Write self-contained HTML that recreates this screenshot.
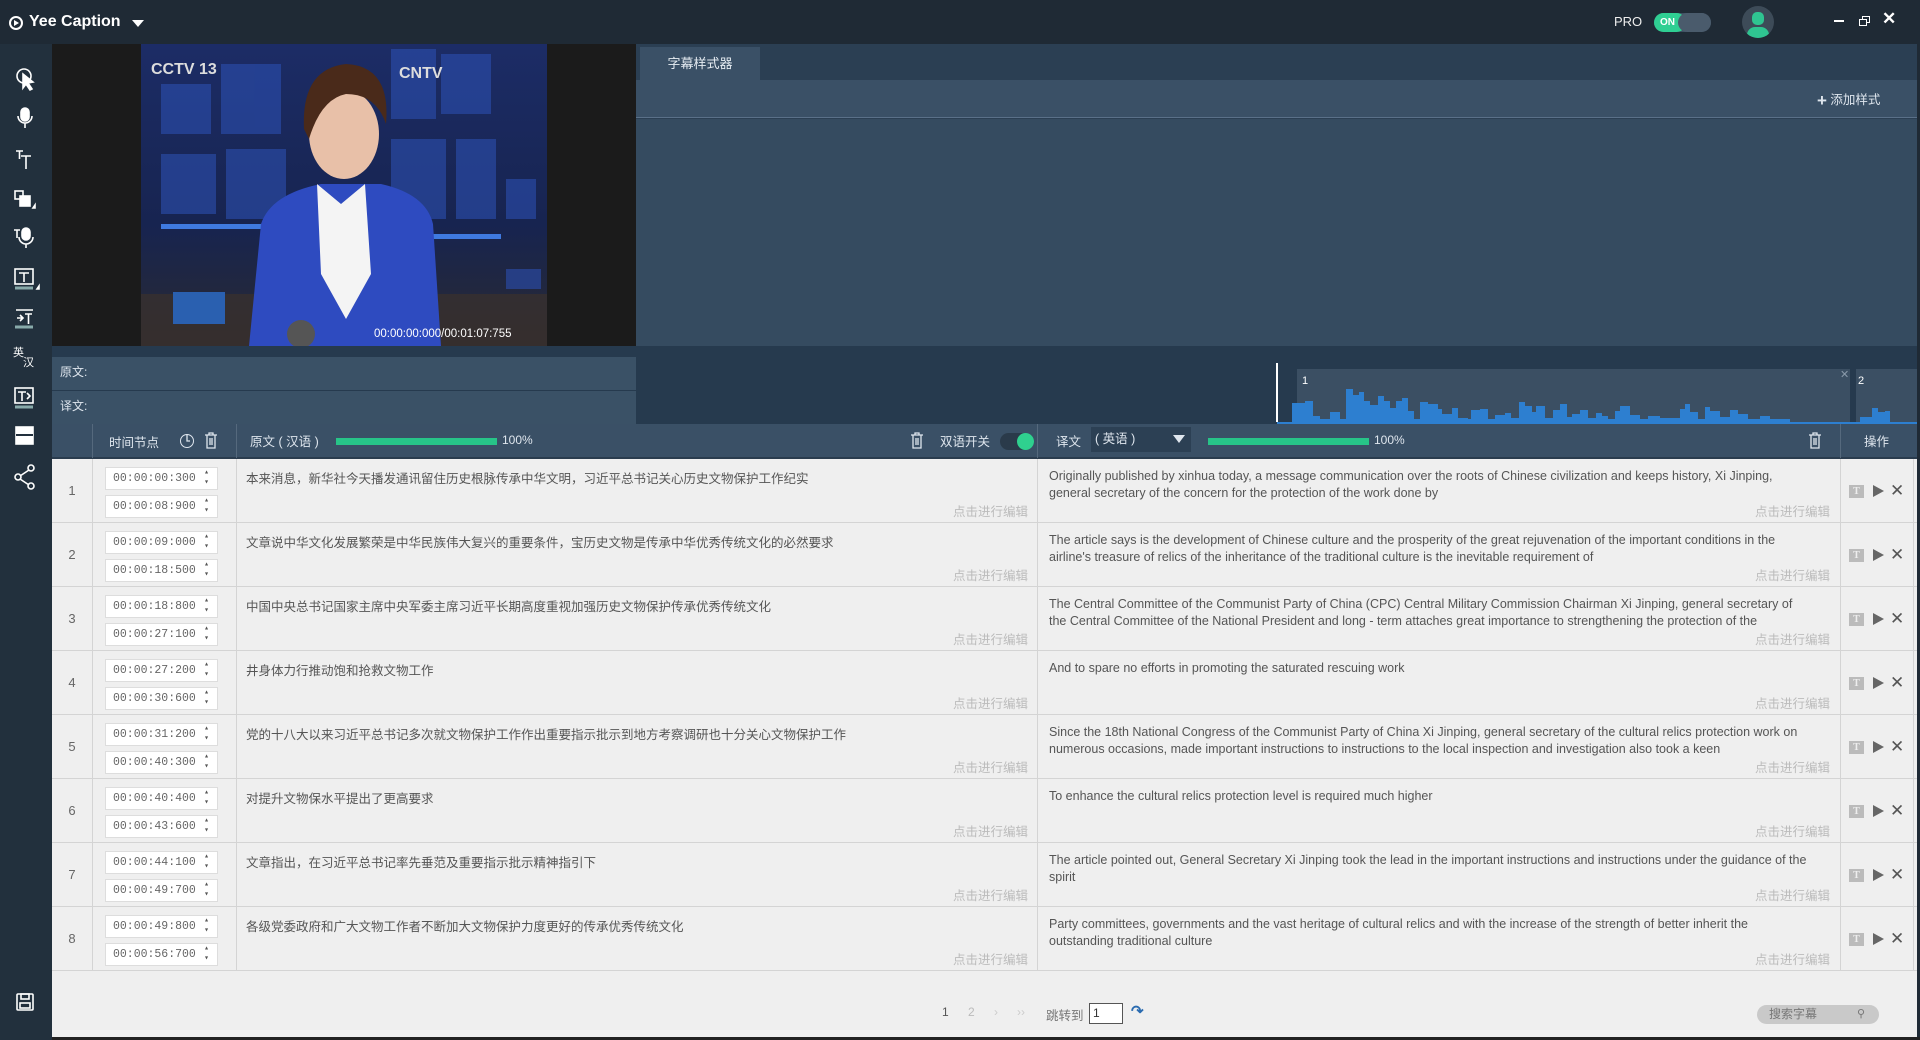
<!DOCTYPE html>
<html><head><meta charset="utf-8"><style>
*{margin:0;padding:0;box-sizing:border-box}
body{width:1920px;height:1040px;overflow:hidden;background:#efefef;font-family:"Liberation Sans","Noto Sans CJK SC",sans-serif;position:relative;font-size:13px;color:#555}
.a{position:absolute}
.w{color:#dfe6ee}
.row{position:absolute;left:52px;width:1868px;height:64px;border-bottom:1px solid #d4d4d4;background:#efefef}
.num{position:absolute;left:0;width:40px;top:0;height:63px;line-height:63px;text-align:center;color:#666}
.vs{position:absolute;top:0;height:63px;width:1px;background:#d4d4d4}
.ti{position:absolute;left:53px;width:113px;height:23px;background:#fff;border:1px solid #ddd;font-family:"Liberation Mono",monospace;font-size:11.5px;color:#666;padding-left:7px;line-height:21px}
.ti:after{content:"▴\A▾";white-space:pre;position:absolute;right:8px;top:0px;font-size:8px;line-height:10px;color:#555}
.zh{position:absolute;left:194px;top:9px;font-size:12.5px;color:#555}
.ed{position:absolute;font-size:12.5px;color:#bbb;top:42px}
.en{position:absolute;left:997px;top:9px;width:762px;font-size:12.5px;line-height:17px;color:#555}
</style></head><body>
<!-- title bar -->
<div class="a" style="left:0;top:0;width:1920px;height:44px;background:#1f2a35"></div>
<div class="a" style="left:9px;top:16px;width:14px;height:14px;border:2px solid #fff;border-radius:50%"></div>
<div class="a" style="left:14px;top:20px;width:0;height:0;border-left:5px solid #fff;border-top:3px solid transparent;border-bottom:3px solid transparent"></div>
<div class="a" style="left:29px;top:13px;color:#fff;font-weight:bold;font-size:16px">Yee Caption</div>
<div class="a" style="left:132px;top:20px;border-left:6px solid transparent;border-right:6px solid transparent;border-top:7px solid #fff"></div>
<div class="a" style="left:1614px;top:14px;color:#eee;font-size:13px">PRO</div>
<div class="a" style="left:1654px;top:13px;width:57px;height:19px;border-radius:10px;background:#3e5062"></div>
<div class="a" style="left:1654px;top:13px;width:32px;height:19px;border-radius:10px;background:#2fcf93;color:#fff;font-size:10px;font-weight:bold;line-height:19px;padding-left:6px">ON</div>
<div class="a" style="left:1678px;top:13px;width:33px;height:19px;border-radius:10px;background:#4a5b6c"></div>
<div class="a" style="left:1742px;top:6px;width:32px;height:32px;border-radius:50%;background:#3d4b58;overflow:hidden">
<div class="a" style="left:10px;top:6px;width:12px;height:13px;border-radius:5px;background:#2fc491"></div>
<div class="a" style="left:5px;top:21px;width:22px;height:14px;border-radius:8px 8px 0 0;background:#2fc491"></div></div>
<div class="a" style="left:1834px;top:20px;width:10px;height:2px;background:#fff"></div>
<div class="a" style="left:1862px;top:16px;width:8px;height:7px;border:1.5px solid #fff"></div>
<div class="a" style="left:1859px;top:19px;width:8px;height:7px;border:1.5px solid #fff;background:#1f2a35"></div>
<div class="a" style="left:1882px;top:9px;color:#fff;font-size:17px;font-weight:bold">✕</div>
<!-- sidebar -->
<div class="a" style="left:0;top:44px;width:52px;height:996px;background:#22303d"></div>
<svg class="a" style="left:0;top:44px" width="52" height="996" fill="none" stroke="#fff" stroke-width="1.6">
<circle cx="24" cy="32" r="7"/><path d="M23 30 L23 44 L26 40 L30 46 L32 45 L28 39 L33 38 Z" fill="#fff"/>
<rect x="21" y="64" width="8" height="13" rx="4" fill="#fff"/><path d="M18 72 a7 7 0 0 0 14 0 M25 79 v5"/>
<path d="M16 107 h7 M19.5 107 v8 M21 112 h10 M26 112 v13"/>
<rect x="15" y="147" width="8" height="8"/><rect x="20" y="152" width="10" height="10" fill="#fff"/><path d="M33 164 l2 -3 v3z" fill="#fff"/>
<path d="M14 186 h6 M17 186 v8"/><rect x="22" y="184" width="8" height="12" rx="4" fill="#fff"/><path d="M19 193 a7 7 0 0 0 14 0 M26 200 v4"/>
<rect x="15" y="225" width="18" height="15"/><path d="M19 229 h10 M24 229 v9"/><path d="M15 244 h18" stroke="#8aa" stroke-width="3"/><path d="M37 245 l2-3 v3z" fill="#fff"/>
<path d="M16 266 h17 M20 271 l3 3 l-3 3 M17 274 h5 M25 270 h7 M28.5 270 v10"/><path d="M15 283 h18" stroke="#8aa" stroke-width="3"/>
<text x="13" y="312" font-size="11" fill="#fff" stroke="none" font-family="Noto Sans CJK SC">英</text><text x="23" y="322" font-size="11" fill="#fff" stroke="none" font-family="Noto Sans CJK SC">汉</text>
<rect x="15" y="344" width="18" height="15"/><path d="M18 348 h8 M22 348 v9 M27 349 l3 3 l-3 3"/><path d="M15 363 h18" stroke="#8aa" stroke-width="3"/>
<rect x="16" y="383" width="17" height="17" fill="#fff"/><path d="M16 391 h17" stroke="#22303d" stroke-width="2"/>
<circle cx="31" cy="424" r="3"/><circle cx="18" cy="433" r="3"/><circle cx="31" cy="442" r="3"/><path d="M20 432 l9 -6 M20 435 l9 6"/>
<rect x="17" y="950" width="16" height="16" rx="1"/><rect x="21" y="950" width="8" height="5"/><rect x="20" y="959" width="10" height="5"/>
</svg>
<!-- video area -->
<div class="a" style="left:52px;top:44px;width:584px;height:302px;background:#1b1b1b"></div>
<svg class="a" style="left:141px;top:44px" width="406" height="302">
<defs><linearGradient id="g" x1="0" y1="0" x2="0" y2="1"><stop offset="0" stop-color="#1c2c66"/><stop offset=".6" stop-color="#172450"/><stop offset="1" stop-color="#2a2a30"/></linearGradient></defs>
<rect width="406" height="302" fill="url(#g)"/>
<g fill="#2c4fb0" opacity=".6"><rect x="20" y="40" width="50" height="50"/><rect x="80" y="20" width="60" height="70"/><rect x="20" y="110" width="55" height="60"/><rect x="85" y="105" width="60" height="70"/><rect x="250" y="5" width="45" height="70"/><rect x="300" y="10" width="50" height="60"/><rect x="250" y="95" width="55" height="80"/><rect x="315" y="95" width="40" height="80"/><rect x="365" y="135" width="30" height="40"/><rect x="365" y="225" width="35" height="20"/></g>
<rect x="20" y="180" width="100" height="5" fill="#3f7ae0"/><rect x="290" y="190" width="70" height="5" fill="#3f7ae0"/>
<rect x="0" y="250" width="406" height="52" fill="#3a302c" opacity=".7"/>
<path d="M108 302 L120 180 Q130 150 180 140 L240 140 Q285 150 292 180 L300 302Z" fill="#2e4bc0"/>
<path d="M176 140 L200 160 L224 140 L230 230 L205 275 L180 230Z" fill="#f4f4f4"/>
<ellipse cx="203" cy="90" rx="35" ry="45" fill="#e8c0a8"/>
<path d="M163 85 Q160 25 205 20 Q250 22 245 80 Q235 50 205 50 Q180 55 168 95Z" fill="#4a2a1a"/>
<circle cx="160" cy="290" r="14" fill="#555"/>
<text x="10" y="30" font-size="16" font-weight="bold" fill="#ddd" font-family="Liberation Sans">CCTV 13</text>
<text x="258" y="34" font-size="16" font-weight="bold" fill="#ddd" font-family="Liberation Sans">CNTV</text>
<rect x="32" y="248" width="52" height="32" fill="#2a60b0"/>
<text x="233" y="293" font-size="11.5" fill="#fff" font-family="Liberation Sans">00:00:00:000/00:01:07:755</text>
</svg>
<!-- right panel -->
<div class="a" style="left:636px;top:44px;width:1284px;height:302px;background:#2b3f53"></div>
<div class="a" style="left:640px;top:47px;width:120px;height:33px;background:#3a5066;color:#e6ecf2;text-align:center;line-height:33px;font-size:13px">字幕样式器</div>
<div class="a" style="left:636px;top:80px;width:1284px;height:38px;background:#3a5066;border-bottom:1px solid #5a7088"></div>
<div class="a" style="left:636px;top:119px;width:1284px;height:227px;background:#354b60"></div>
<div class="a" style="left:1817px;top:89px;color:#dfe6ee;font-size:12.5px"><span style="font-size:17px;font-weight:bold;vertical-align:-2px">+</span> 添加样式</div>
<!-- 原文 / 译文 -->
<div class="a" style="left:52px;top:346px;width:1868px;height:78px;background:#263a4e"></div>
<div class="a" style="left:52px;top:357px;width:584px;height:33px;background:#3a5166;color:#dfe6ee;font-size:12px;padding:6px 8px">原文:</div>
<div class="a" style="left:52px;top:391px;width:584px;height:33px;background:#3a5166;color:#dfe6ee;font-size:12px;padding:6px 8px">译文:</div>
<svg class="a" style="left:1260px;top:346px" width="660" height="78">
<rect x="37" y="23" width="553" height="53" fill="#3b4f63"/><rect x="596" y="23" width="64" height="53" fill="#3b4f63"/>
<path fill="#2d7fd0" d="M32 76 V57 H45 V55 H53 V70 H60 V73 H70 V66 H80 V73 H86 V43 H93 V49 H99 V46 H104 V55 H110 V59 H118 V50 H124 V55 H130 V62 H136 V55 H142 V52 H148 V65 H154 V73 H160 V56 H168 V58 H178 V63 H182 V68 H192 V62 H198 V72 H208 V73 H211 V64 H220 V63 H228 V73 H235 V69 H245 V67 H251 V72 H259 V56 H265 V60 H272 V66 H276 V60 H285 V72 H293 V64 H300 V58 H307 V71 H312 V68 H320 V64 H328 V72 H336 V67 H342 V70 H348 V73 H355 V65 H360 V60 H370 V69 H380 V73 H388 V70 H400 V72 H420 V63 H425 V58 H430 V66 H438 V73 H445 V61 H450 V65 H460 V71 H470 V64 H478 V68 H488 V73 H500 V70 H510 V73 H530 V76 H600 V71 H612 V62 H618 V66 H625 V65 H630 V76 Z"/>
<rect x="17" y="76" width="643" height="2" fill="#2d7fd0"/>
<rect x="16" y="17" width="2" height="59" fill="#fff"/>
<text x="42" y="38" font-size="11" fill="#fff" font-family="Liberation Sans">1</text>
<text x="598" y="38" font-size="11" fill="#fff" font-family="Liberation Sans">2</text>
<text x="580" y="32" font-size="11" fill="#8a9aaa" font-family="Liberation Sans">✕</text>
</svg>
<!-- header -->
<div class="a" style="left:52px;top:424px;width:1868px;height:35px;background:#3a5066;border-bottom:2px solid #2a3c4e"></div>
<div class="a" style="left:92px;top:424px;width:1px;height:34px;background:#55697d"></div>
<div class="a" style="left:236px;top:424px;width:1px;height:34px;background:#55697d"></div>
<div class="a" style="left:1037px;top:424px;width:1px;height:34px;background:#55697d"></div>
<div class="a" style="left:1840px;top:424px;width:1px;height:34px;background:#55697d"></div>
<div class="a w" style="left:109px;top:432px;font-size:12.5px">时间节点</div>
<div class="a" style="left:180px;top:434px;width:14px;height:14px;border:1.5px solid #dfe6ee;border-radius:50%"></div>
<div class="a w" style="left:250px;top:431px;font-size:12.5px">原文 ( 汉语 )</div>
<div class="a" style="left:336px;top:438px;width:161px;height:7px;background:#27c488"></div>
<div class="a w" style="left:502px;top:433px;font-size:12px">100%</div>
<div class="a w" style="left:940px;top:431px;font-size:12.5px">双语开关</div>
<div class="a" style="left:1000px;top:433px;width:34px;height:17px;border-radius:9px;background:#2a3a4a"></div>
<div class="a" style="left:1017px;top:433px;width:17px;height:17px;border-radius:50%;background:#2fd08f"></div>
<div class="a w" style="left:1056px;top:431px;font-size:12.5px">译文</div>
<div class="a w" style="left:1091px;top:427px;width:100px;height:25px;background:#2c4054;font-size:12.5px;line-height:25px;padding-left:4px">( 英语 )</div>
<div class="a" style="left:1173px;top:435px;border-left:6px solid transparent;border-right:6px solid transparent;border-top:8px solid #dfe6ee"></div>
<div class="a" style="left:1208px;top:438px;width:161px;height:7px;background:#27c488"></div>
<div class="a w" style="left:1374px;top:433px;font-size:12px">100%</div>
<div class="a w" style="left:1864px;top:431px;font-size:12.5px">操作</div>
<svg class="a" style="left:0;top:424px" width="1920" height="34" fill="none" stroke="#dfe6ee" stroke-width="1.3">
<path d="M187 10 v7 h3"/>
<path d="M205 11 h12 M209 11 v-2 h4 v2 M207 11 v13 h8 v-13 M210 14 v7 M212 14 v7"/>
<path d="M911 11 h12 M915 11 v-2 h4 v2 M913 11 v13 h8 v-13 M916 14 v7 M918 14 v7"/>
<path d="M1809 11 h12 M1813 11 v-2 h4 v2 M1811 11 v13 h8 v-13 M1814 14 v7 M1816 14 v7"/>
</svg>
<!-- rows -->
<div class="row" style="top:459px"><div class="num">1</div><div class="vs" style="left:40px"></div><div class="ti" style="top:8px">00:00:00:300</div><div class="ti" style="top:36px">00:00:08:900</div><div class="vs" style="left:184px"></div><div class="zh">本来消息，新华社今天播发通讯留住历史根脉传承中华文明，习近平总书记关心历史文物保护工作纪实</div><div class="ed" style="left:901px">点击进行编辑</div><div class="vs" style="left:985px"></div><div class="en">Originally published by xinhua today, a message communication over the roots of Chinese civilization and keeps history, Xi Jinping, general secretary of the concern for the protection of the work done by</div><div class="ed" style="left:1703px">点击进行编辑</div><div class="vs" style="left:1788px"></div><div class="vs" style="left:1861px"></div>
<div class="a" style="left:1797px;top:26px;width:15px;height:13px;background:#bbb;color:#eee;font:bold 10px 'Liberation Serif';text-align:center;line-height:13px">T</div><div class="a" style="left:1821px;top:26px;border-left:11px solid #666;border-top:6px solid transparent;border-bottom:6px solid transparent"></div><div class="a" style="left:1838px;top:22px;font-size:17px;color:#555">✕</div></div>

<div class="row" style="top:523px"><div class="num">2</div><div class="vs" style="left:40px"></div><div class="ti" style="top:8px">00:00:09:000</div><div class="ti" style="top:36px">00:00:18:500</div><div class="vs" style="left:184px"></div><div class="zh">文章说中华文化发展繁荣是中华民族伟大复兴的重要条件，宝历史文物是传承中华优秀传统文化的必然要求</div><div class="ed" style="left:901px">点击进行编辑</div><div class="vs" style="left:985px"></div><div class="en">The article says is the development of Chinese culture and the prosperity of the great rejuvenation of the important conditions in the airline's treasure of relics of the inheritance of the traditional culture is the inevitable requirement of</div><div class="ed" style="left:1703px">点击进行编辑</div><div class="vs" style="left:1788px"></div><div class="vs" style="left:1861px"></div>
<div class="a" style="left:1797px;top:26px;width:15px;height:13px;background:#bbb;color:#eee;font:bold 10px 'Liberation Serif';text-align:center;line-height:13px">T</div><div class="a" style="left:1821px;top:26px;border-left:11px solid #666;border-top:6px solid transparent;border-bottom:6px solid transparent"></div><div class="a" style="left:1838px;top:22px;font-size:17px;color:#555">✕</div></div>

<div class="row" style="top:587px"><div class="num">3</div><div class="vs" style="left:40px"></div><div class="ti" style="top:8px">00:00:18:800</div><div class="ti" style="top:36px">00:00:27:100</div><div class="vs" style="left:184px"></div><div class="zh">中国中央总书记国家主席中央军委主席习近平长期高度重视加强历史文物保护传承优秀传统文化</div><div class="ed" style="left:901px">点击进行编辑</div><div class="vs" style="left:985px"></div><div class="en">The Central Committee of the Communist Party of China (CPC) Central Military Commission Chairman Xi Jinping, general secretary of the Central Committee of the National President and long - term attaches great importance to strengthening the protection of the</div><div class="ed" style="left:1703px">点击进行编辑</div><div class="vs" style="left:1788px"></div><div class="vs" style="left:1861px"></div>
<div class="a" style="left:1797px;top:26px;width:15px;height:13px;background:#bbb;color:#eee;font:bold 10px 'Liberation Serif';text-align:center;line-height:13px">T</div><div class="a" style="left:1821px;top:26px;border-left:11px solid #666;border-top:6px solid transparent;border-bottom:6px solid transparent"></div><div class="a" style="left:1838px;top:22px;font-size:17px;color:#555">✕</div></div>

<div class="row" style="top:651px"><div class="num">4</div><div class="vs" style="left:40px"></div><div class="ti" style="top:8px">00:00:27:200</div><div class="ti" style="top:36px">00:00:30:600</div><div class="vs" style="left:184px"></div><div class="zh">井身体力行推动饱和抢救文物工作</div><div class="ed" style="left:901px">点击进行编辑</div><div class="vs" style="left:985px"></div><div class="en">And to spare no efforts in promoting the saturated rescuing work</div><div class="ed" style="left:1703px">点击进行编辑</div><div class="vs" style="left:1788px"></div><div class="vs" style="left:1861px"></div>
<div class="a" style="left:1797px;top:26px;width:15px;height:13px;background:#bbb;color:#eee;font:bold 10px 'Liberation Serif';text-align:center;line-height:13px">T</div><div class="a" style="left:1821px;top:26px;border-left:11px solid #666;border-top:6px solid transparent;border-bottom:6px solid transparent"></div><div class="a" style="left:1838px;top:22px;font-size:17px;color:#555">✕</div></div>

<div class="row" style="top:715px"><div class="num">5</div><div class="vs" style="left:40px"></div><div class="ti" style="top:8px">00:00:31:200</div><div class="ti" style="top:36px">00:00:40:300</div><div class="vs" style="left:184px"></div><div class="zh">党的十八大以来习近平总书记多次就文物保护工作作出重要指示批示到地方考察调研也十分关心文物保护工作</div><div class="ed" style="left:901px">点击进行编辑</div><div class="vs" style="left:985px"></div><div class="en">Since the 18th National Congress of the Communist Party of China Xi Jinping, general secretary of the cultural relics protection work on numerous occasions, made important instructions to instructions to the local inspection and investigation also took a keen</div><div class="ed" style="left:1703px">点击进行编辑</div><div class="vs" style="left:1788px"></div><div class="vs" style="left:1861px"></div>
<div class="a" style="left:1797px;top:26px;width:15px;height:13px;background:#bbb;color:#eee;font:bold 10px 'Liberation Serif';text-align:center;line-height:13px">T</div><div class="a" style="left:1821px;top:26px;border-left:11px solid #666;border-top:6px solid transparent;border-bottom:6px solid transparent"></div><div class="a" style="left:1838px;top:22px;font-size:17px;color:#555">✕</div></div>

<div class="row" style="top:779px"><div class="num">6</div><div class="vs" style="left:40px"></div><div class="ti" style="top:8px">00:00:40:400</div><div class="ti" style="top:36px">00:00:43:600</div><div class="vs" style="left:184px"></div><div class="zh">对提升文物保水平提出了更高要求</div><div class="ed" style="left:901px">点击进行编辑</div><div class="vs" style="left:985px"></div><div class="en">To enhance the cultural relics protection level is required much higher</div><div class="ed" style="left:1703px">点击进行编辑</div><div class="vs" style="left:1788px"></div><div class="vs" style="left:1861px"></div>
<div class="a" style="left:1797px;top:26px;width:15px;height:13px;background:#bbb;color:#eee;font:bold 10px 'Liberation Serif';text-align:center;line-height:13px">T</div><div class="a" style="left:1821px;top:26px;border-left:11px solid #666;border-top:6px solid transparent;border-bottom:6px solid transparent"></div><div class="a" style="left:1838px;top:22px;font-size:17px;color:#555">✕</div></div>

<div class="row" style="top:843px"><div class="num">7</div><div class="vs" style="left:40px"></div><div class="ti" style="top:8px">00:00:44:100</div><div class="ti" style="top:36px">00:00:49:700</div><div class="vs" style="left:184px"></div><div class="zh">文章指出，在习近平总书记率先垂范及重要指示批示精神指引下</div><div class="ed" style="left:901px">点击进行编辑</div><div class="vs" style="left:985px"></div><div class="en">The article pointed out, General Secretary Xi Jinping took the lead in the important instructions and instructions under the guidance of the spirit</div><div class="ed" style="left:1703px">点击进行编辑</div><div class="vs" style="left:1788px"></div><div class="vs" style="left:1861px"></div>
<div class="a" style="left:1797px;top:26px;width:15px;height:13px;background:#bbb;color:#eee;font:bold 10px 'Liberation Serif';text-align:center;line-height:13px">T</div><div class="a" style="left:1821px;top:26px;border-left:11px solid #666;border-top:6px solid transparent;border-bottom:6px solid transparent"></div><div class="a" style="left:1838px;top:22px;font-size:17px;color:#555">✕</div></div>

<div class="row" style="top:907px"><div class="num">8</div><div class="vs" style="left:40px"></div><div class="ti" style="top:8px">00:00:49:800</div><div class="ti" style="top:36px">00:00:56:700</div><div class="vs" style="left:184px"></div><div class="zh">各级党委政府和广大文物工作者不断加大文物保护力度更好的传承优秀传统文化</div><div class="ed" style="left:901px">点击进行编辑</div><div class="vs" style="left:985px"></div><div class="en">Party committees, governments and the vast heritage of cultural relics and with the increase of the strength of better inherit the outstanding traditional culture</div><div class="ed" style="left:1703px">点击进行编辑</div><div class="vs" style="left:1788px"></div><div class="vs" style="left:1861px"></div>
<div class="a" style="left:1797px;top:26px;width:15px;height:13px;background:#bbb;color:#eee;font:bold 10px 'Liberation Serif';text-align:center;line-height:13px">T</div><div class="a" style="left:1821px;top:26px;border-left:11px solid #666;border-top:6px solid transparent;border-bottom:6px solid transparent"></div><div class="a" style="left:1838px;top:22px;font-size:17px;color:#555">✕</div></div>

<!-- pagination -->
<div class="a" style="left:942px;top:1005px;font-size:12px;color:#555">1</div>
<div class="a" style="left:968px;top:1005px;font-size:12px;color:#bbb">2</div>
<div class="a" style="left:994px;top:1005px;font-size:12px;color:#ccc">›</div>
<div class="a" style="left:1017px;top:1005px;font-size:12px;color:#ccc">››</div>
<div class="a" style="left:1046px;top:1005px;font-size:12.5px;color:#777">跳转到</div>
<div class="a" style="left:1089px;top:1003px;width:34px;height:21px;background:#fff;border:1px solid #555;font-size:12px;padding-left:3px;line-height:19px;color:#333">1</div>
<div class="a" style="left:1131px;top:1002px;font-size:15px;color:#2a6bb0;font-weight:bold">↷</div>
<div class="a" style="left:1757px;top:1005px;width:122px;height:19px;border-radius:10px;background:#c9c9c9;color:#777;font-size:12px;padding-left:12px;line-height:19px">搜索字幕<span style="position:absolute;right:14px;font-size:11px">⚲</span></div>
<div class="a" style="left:1917px;top:44px;width:3px;height:996px;background:#1f2a35"></div>
<div class="a" style="left:52px;top:1037px;width:1868px;height:3px;background:#222"></div>
</body></html>
